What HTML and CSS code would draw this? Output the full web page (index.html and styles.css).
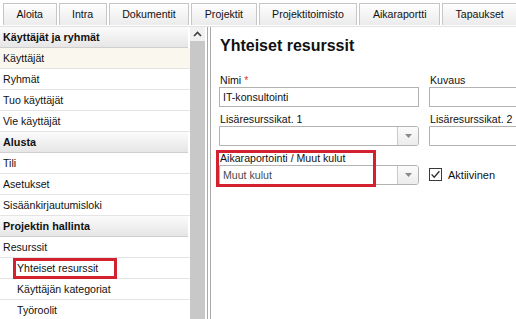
FILE: index.html
```html
<!DOCTYPE html>
<html lang="fi">
<head>
<meta charset="utf-8">
<title>Yhteiset resurssit</title>
<link rel="stylesheet" href="styles.css">
</head>
<body>
<div class="tabs">
  <div class="tab">Aloita</div>
  <div class="tab">Intra</div>
  <div class="tab">Dokumentit</div>
  <div class="tab">Projektit</div>
  <div class="tab">Projektitoimisto</div>
  <div class="tab">Aikaraportti</div>
  <div class="tab">Tapaukset</div>
  <div class="tab tab-more">&nbsp;</div>
</div>
<div class="main">
  <div class="sidebar">
    <div class="nav">
      <div class="nav-head">Käyttäjät ja ryhmät</div>
      <div class="nav-item selected">Käyttäjät</div>
      <div class="nav-item">Ryhmät</div>
      <div class="nav-item">Tuo käyttäjät</div>
      <div class="nav-item">Vie käyttäjät</div>
      <div class="nav-head">Alusta</div>
      <div class="nav-item">Tili</div>
      <div class="nav-item">Asetukset</div>
      <div class="nav-item">Sisäänkirjautumisloki</div>
      <div class="nav-head">Projektin hallinta</div>
      <div class="nav-item">Resurssit</div>
      <div class="nav-item sub marked">Yhteiset resurssit<span class="nav-mark"></span></div>
      <div class="nav-item sub">Käyttäjän kategoriat</div>
      <div class="nav-item sub">Työroolit</div>
    </div>
    <div class="scrollbar">
      <div class="scroll-up">
        <svg width="9" height="6" viewBox="0 0 9 6"><path d="M1 5 L4.5 1.5 L8 5" fill="none" stroke="#404040" stroke-width="1.6"/></svg>
      </div>
      <div class="scroll-track"></div>
    </div>
  </div>
  <div class="splitter"></div>
  <div class="content">
    <h1 class="title">Yhteiset resurssit</h1>
    <div class="form">
      <div class="field">
        <div class="label">Nimi <span class="req">*</span></div>
        <div class="input">IT-konsultointi</div>
      </div>
      <div class="field">
        <div class="label">Kuvaus</div>
        <div class="input"></div>
      </div>
      <div class="field">
        <div class="label">Lisäresurssikat. 1</div>
        <div class="combo">
          <span class="combo-text"></span>
          <span class="combo-btn"><svg width="7" height="4" viewBox="0 0 7 4"><path d="M0 0 H7 L3.5 4 Z" fill="#8a8a8a"/></svg></span>
        </div>
      </div>
      <div class="field">
        <div class="label">Lisäresurssikat. 2</div>
        <div class="combo">
          <span class="combo-text"></span>
          <span class="combo-btn"><svg width="7" height="4" viewBox="0 0 7 4"><path d="M0 0 H7 L3.5 4 Z" fill="#8a8a8a"/></svg></span>
        </div>
      </div>
      <div class="field marked-field">
        <div class="label">Aikaraportointi / Muut kulut</div>
        <div class="combo">
          <span class="combo-text muted">Muut kulut</span>
          <span class="combo-btn"><svg width="7" height="4" viewBox="0 0 7 4"><path d="M0 0 H7 L3.5 4 Z" fill="#8a8a8a"/></svg></span>
        </div>
        <span class="field-mark"></span>
      </div>
      <div class="field check-field">
        <div class="check-row">
          <svg class="checkbox" width="13" height="13" viewBox="0 0 13 13"><rect x="0.5" y="0.5" width="12" height="12" fill="#fff" stroke="#3a3a3a"/><path d="M2.6 6.4 L5.2 9.2 L10.4 3.2" fill="none" stroke="#2a2a2a" stroke-width="1.3"/></svg>
          <span>Aktiivinen</span>
        </div>
      </div>
    </div>
  </div>
</div>
</body>
</html>
```

FILE: styles.css
```css
* { box-sizing: border-box; }

html, body {
  margin: 0;
  padding: 0;
  background: #fff;
  overflow: hidden;
}

body {
  width: 516px;
  height: 319px;
  font-family: "Liberation Sans", Arial, sans-serif;
  font-size: 10.6px;
  color: #111;
}

/* Tabs */
.tabs {
  display: flex;
  height: 27px;
  padding: 3px 0 0 3px;
  gap: 2px;
  border-bottom: 1px solid #e2e2e2;
  white-space: nowrap;
  overflow: hidden;
}

.tab {
  flex: none;
  height: 22px;
  padding: 0 12.5px;
  line-height: 21px;
  font-size: 10.6px;
  color: #111;
  border: 1px solid #c6c6c6;
  border-bottom: none;
  background: linear-gradient(#fefefe, #ebebeb);
}

.tab-more {
  padding: 0 10px;
}

/* Main layout */
.main {
  display: flex;
  height: 292px;
}

.sidebar {
  display: flex;
  width: 205px;
  flex: none;
}

.nav {
  width: 190px;
  flex: none;
  overflow: hidden;
}

.nav-head,
.nav-item {
  height: 21px;
  line-height: 20px;
  padding-left: 3px;
  white-space: nowrap;
  border-bottom: 1px solid #e4e4e4;
}

.nav-head {
  font-weight: bold;
  font-size: 10.8px;
  color: #111;
  background: linear-gradient(#fbfbfb, #e6e6e6);
  border-bottom: 1px solid #cfcfcf;
  margin-right: 2px;
}

.nav-item.selected {
  background: #faf8ee;
}

.nav-item.sub {
  padding-left: 17px;
}

.nav-item.marked {
  position: relative;
}

.nav-mark {
  position: absolute;
  left: 13px;
  top: 0;
  width: 104px;
  height: 21px;
  border: 3px solid #d3212f;
}

.scrollbar {
  width: 15px;
  flex: none;
  display: flex;
  flex-direction: column;
  background: #c9c9c9;
}

.scroll-up {
  height: 14px;
  display: flex;
  align-items: center;
  justify-content: center;
  background: #f1f1f1;
}

.scroll-track {
  flex: 1;
  background: #c8c8c8;
}

.splitter {
  flex: none;
  width: 4px;
  margin-left: 2px;
  border-left: 1px solid #a9a9a9;
  border-right: 1px solid #a9a9a9;
  background: #fff;
}

/* Content */
.content {
  flex: 1;
  min-width: 0;
  padding-left: 8px;
  overflow: hidden;
}

.title {
  margin: 9px 0 17px 1px;
  font-size: 16px;
  line-height: 20px;
  font-weight: bold;
  color: #111;
}

.form {
  display: grid;
  grid-template-columns: 200px 200px;
  column-gap: 10px;
  row-gap: 5px;
}

.field {
  display: flex;
  flex-direction: column;
}

.label {
  height: 14px;
  line-height: 14px;
  padding-left: 1px;
  white-space: nowrap;
}

.req {
  color: #e0352b;
}

.input {
  height: 20px;
  line-height: 18px;
  padding-left: 3px;
  border: 1px solid #b3b3b3;
  background: #fff;
}

.combo {
  display: flex;
  height: 20px;
  border: 1px solid #b3b3b3;
  border-radius: 0 3px 3px 0;
  background: #fff;
}

.combo-text {
  flex: 1;
  line-height: 18px;
  padding-left: 3px;
}

.combo-text.muted {
  color: #4a4a4a;
}

.combo-btn {
  width: 21px;
  display: flex;
  align-items: center;
  justify-content: center;
  border-left: 1px solid #c9c9c9;
  border-radius: 0 2px 2px 0;
  background: linear-gradient(#fbfbfb, #ececec);
}

.marked-field {
  position: relative;
}

.field-mark {
  position: absolute;
  left: -3px;
  top: -1px;
  width: 160px;
  height: 37px;
  border: 3px solid #d3212f;
}

.check-field {
  padding-top: 14px;
}

.check-row {
  display: flex;
  align-items: center;
  gap: 6px;
  height: 20px;
  font-size: 11px;
}

.checkbox {
  flex: none;
  margin-top: -2px;
}
```
